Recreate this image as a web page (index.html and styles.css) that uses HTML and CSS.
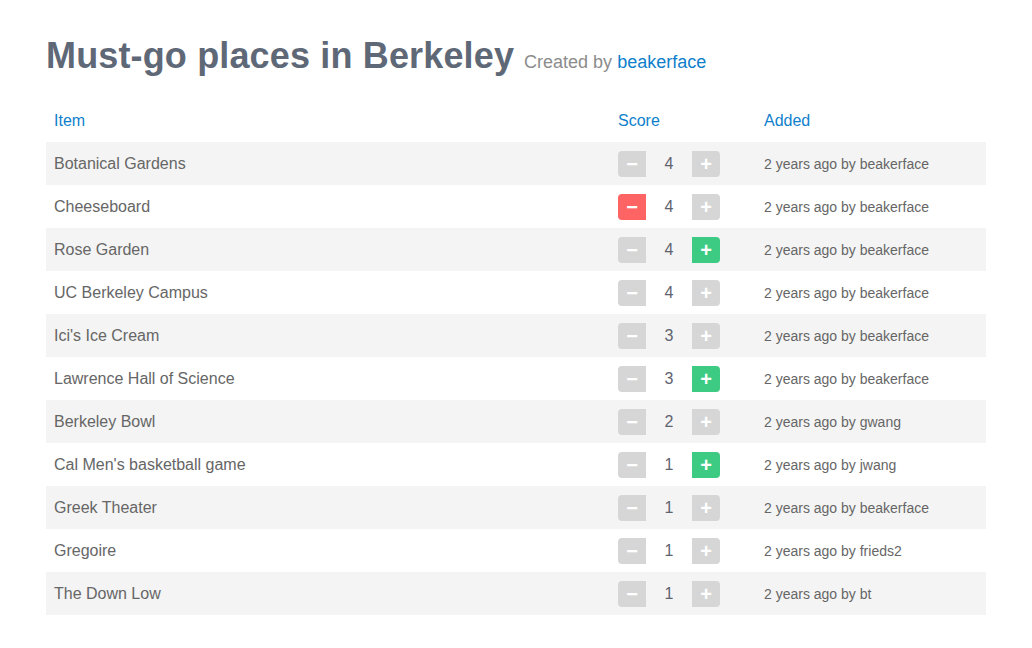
FILE: index.html
```html
<!DOCTYPE html>
<html>
<head>
<meta charset="utf-8">
<link rel="stylesheet" href="styles.css">
</head>
<body>
<div class="page">
  <div class="heading">
    <h1 class="title">Must-go places in Berkeley</h1>
    <span class="byline">Created by <a class="link" href="#">beakerface</a></span>
  </div>
  <table class="list">
    <thead>
      <tr>
        <th class="col-item"><a class="link" href="#">Item</a></th>
        <th class="col-score"><a class="link" href="#">Score</a></th>
        <th class="col-added"><a class="link" href="#">Added</a></th>
      </tr>
    </thead>
    <tbody>
      <tr><td>Botanical Gardens</td><td><div class="vote"><span class="btn minus">−</span><span class="num">4</span><span class="btn plus">+</span></div></td><td class="added">2 years ago by beakerface</td></tr>
      <tr><td>Cheeseboard</td><td><div class="vote"><span class="btn minus down">−</span><span class="num">4</span><span class="btn plus">+</span></div></td><td class="added">2 years ago by beakerface</td></tr>
      <tr><td>Rose Garden</td><td><div class="vote"><span class="btn minus">−</span><span class="num">4</span><span class="btn plus up">+</span></div></td><td class="added">2 years ago by beakerface</td></tr>
      <tr><td>UC Berkeley Campus</td><td><div class="vote"><span class="btn minus">−</span><span class="num">4</span><span class="btn plus">+</span></div></td><td class="added">2 years ago by beakerface</td></tr>
      <tr><td>Ici's Ice Cream</td><td><div class="vote"><span class="btn minus">−</span><span class="num">3</span><span class="btn plus">+</span></div></td><td class="added">2 years ago by beakerface</td></tr>
      <tr><td>Lawrence Hall of Science</td><td><div class="vote"><span class="btn minus">−</span><span class="num">3</span><span class="btn plus up">+</span></div></td><td class="added">2 years ago by beakerface</td></tr>
      <tr><td>Berkeley Bowl</td><td><div class="vote"><span class="btn minus">−</span><span class="num">2</span><span class="btn plus">+</span></div></td><td class="added">2 years ago by gwang</td></tr>
      <tr><td>Cal Men's basketball game</td><td><div class="vote"><span class="btn minus">−</span><span class="num">1</span><span class="btn plus up">+</span></div></td><td class="added">2 years ago by jwang</td></tr>
      <tr><td>Greek Theater</td><td><div class="vote"><span class="btn minus">−</span><span class="num">1</span><span class="btn plus">+</span></div></td><td class="added">2 years ago by beakerface</td></tr>
      <tr><td>Gregoire</td><td><div class="vote"><span class="btn minus">−</span><span class="num">1</span><span class="btn plus">+</span></div></td><td class="added">2 years ago by frieds2</td></tr>
      <tr><td>The Down Low</td><td><div class="vote"><span class="btn minus">−</span><span class="num">1</span><span class="btn plus">+</span></div></td><td class="added">2 years ago by bt</td></tr>
    </tbody>
  </table>
</div>
</body>
</html>
```
FILE: styles.css
```css
html, body {
  margin: 0;
  padding: 0;
  background: #ffffff;
}
body {
  font-family: "Liberation Sans", Arial, Helvetica, sans-serif;
  color: #666666;
}
.page {
  width: 940px;
  padding: 36px 0 0 46px;
}
.heading {
  display: flex;
  align-items: baseline;
  gap: 10px;
  height: 40px;
  margin-bottom: 23px;
}
.title {
  margin: 0;
  font-size: 36px;
  line-height: 40px;
  font-weight: bold;
  color: #5f6877;
  letter-spacing: 0.15px;
}
.byline {
  font-size: 18px;
  color: #8c8c8c;
}
.link {
  color: #0f7fcc;
  text-decoration: none;
}
.list {
  width: 940px;
  border-collapse: collapse;
  font-size: 16px;
}
.list th {
  text-align: left;
  font-weight: normal;
  height: 43px;
  padding: 0 8px;
  vertical-align: middle;
}
.list td {
  height: 42px;
  padding: 1px 8px 0;
  vertical-align: middle;
  color: #666666;
}
.list tbody tr:nth-child(odd) {
  background: #f4f4f4;
}
.col-item {
  width: 548px;
}
.col-score {
  width: 130px;
}
.added {
  font-size: 14px;
  color: #999999;
}
.vote {
  display: flex;
  align-items: center;
  margin-top: -1px;
}
.btn {
  width: 28px;
  height: 26px;
  background: #d6d6d6;
  color: #ffffff;
  font-size: 20px;
  font-weight: bold;
  line-height: 26px;
  text-align: center;
}
.minus {
  border-radius: 4px 0 0 4px;
}
.plus {
  border-radius: 0 4px 4px 0;
}
.down {
  background: #ff6464;
}
.up {
  background: #3dcb84;
}
.num {
  width: 46px;
  text-align: center;
  font-size: 16px;
  color: #5f6370;
}
```
